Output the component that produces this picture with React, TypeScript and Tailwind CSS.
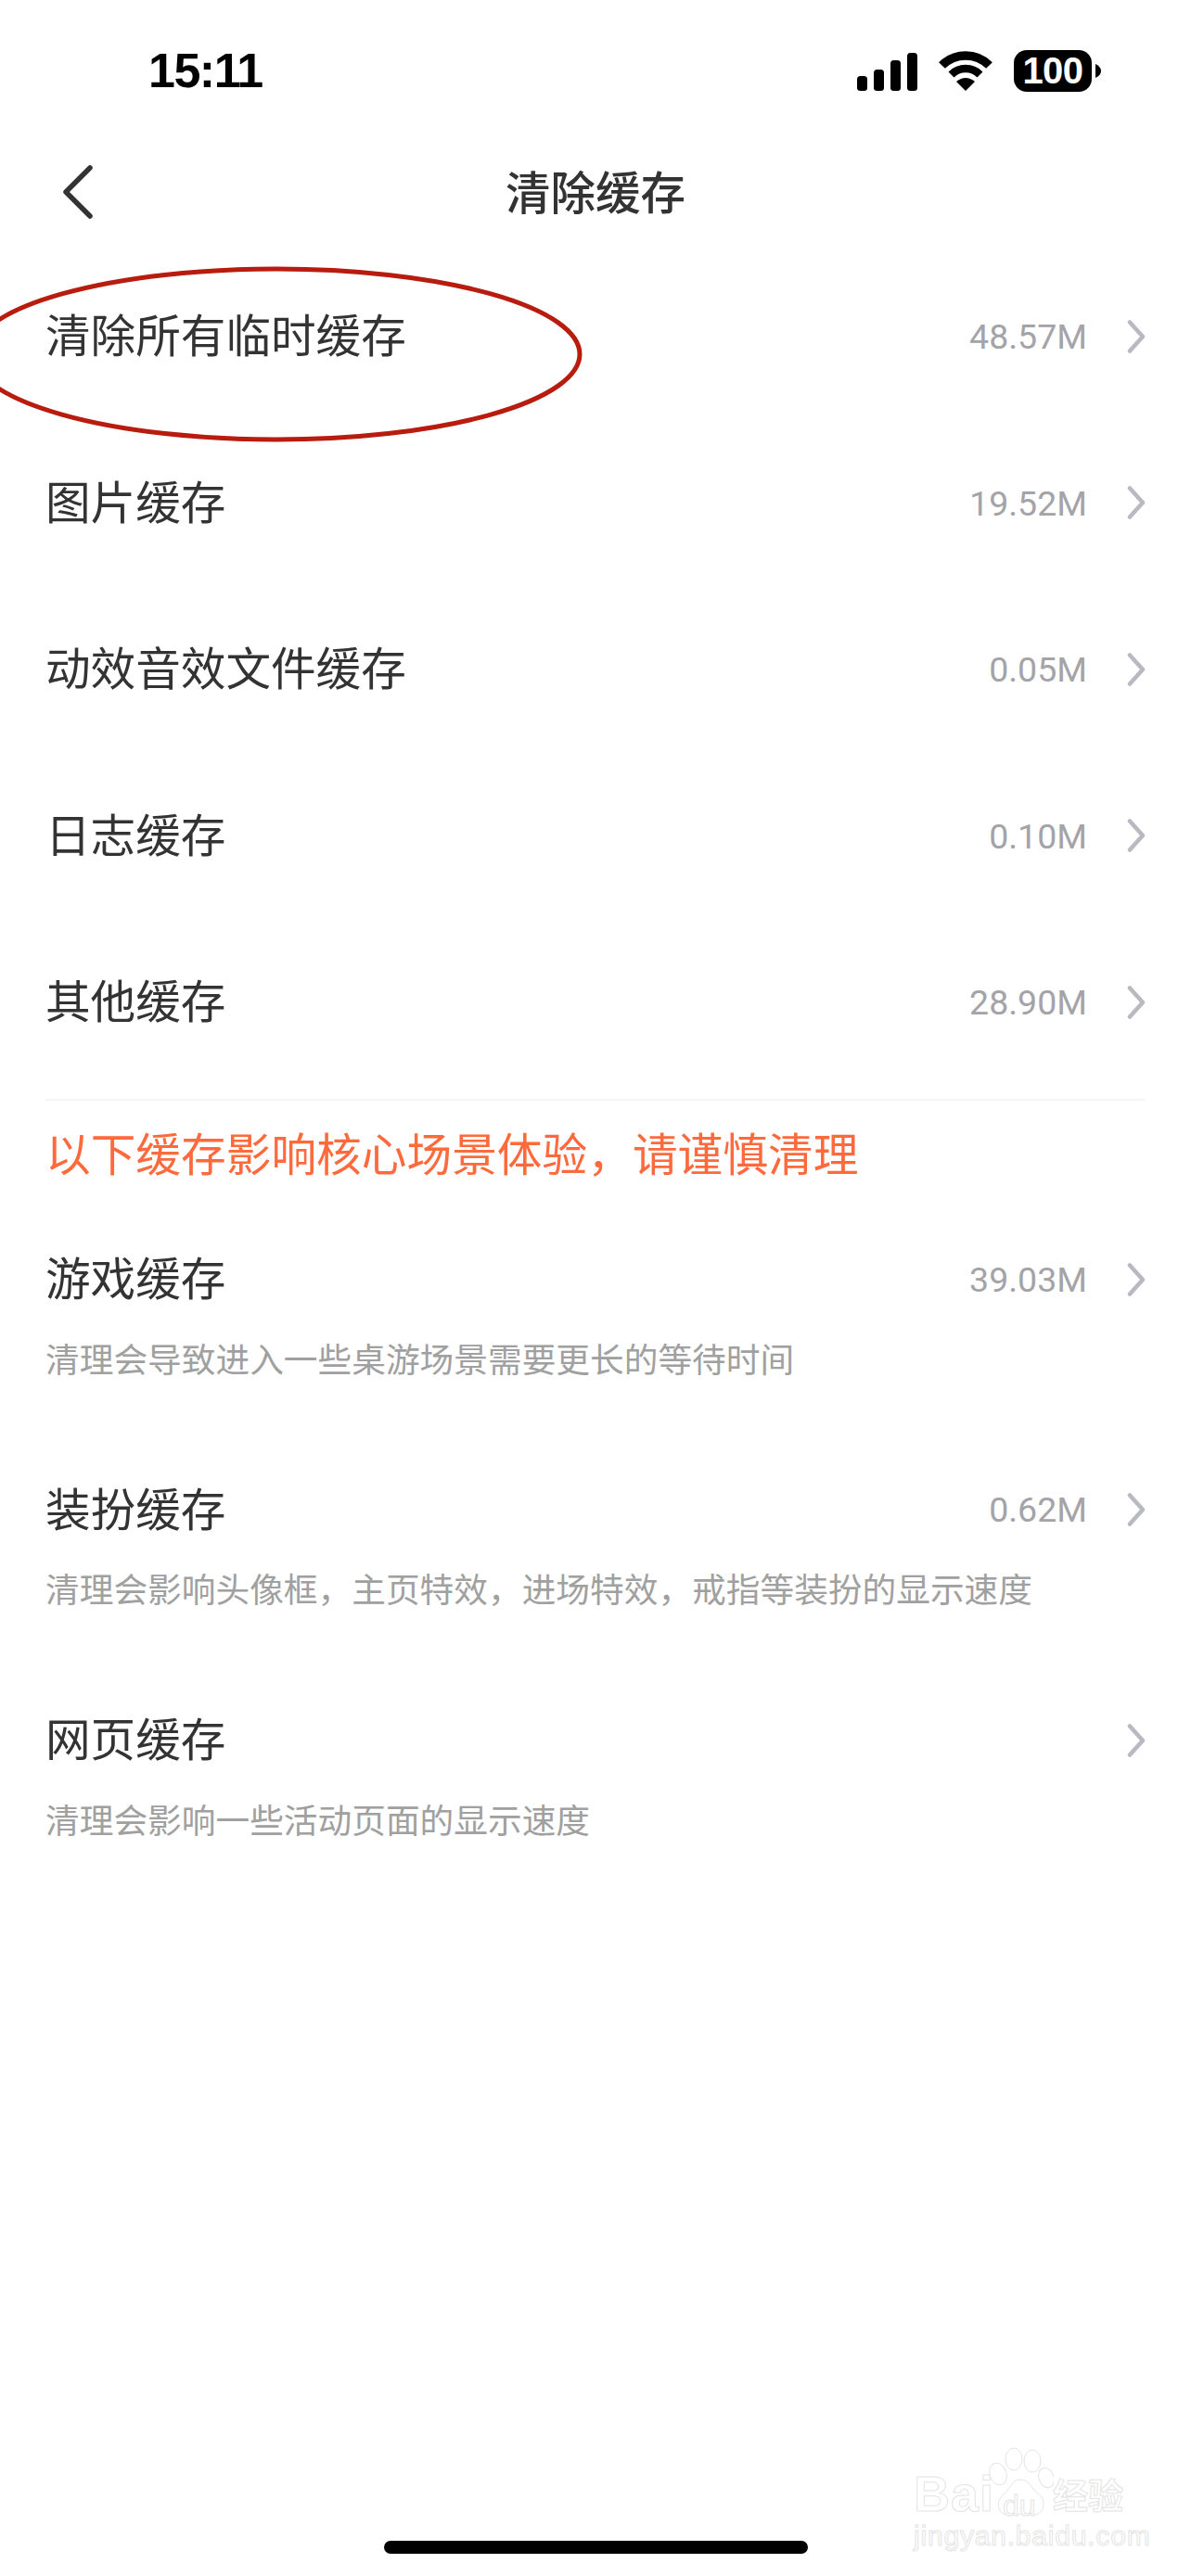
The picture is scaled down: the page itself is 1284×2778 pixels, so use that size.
const CJK = "font-['Noto_Sans_CJK_SC','Noto_Sans',sans-serif]";

function Chevron() {
  return (
    <svg width="20" height="36" viewBox="0 0 20 36" fill="none" className="shrink-0">
      <path d="M3 2.5 L17 18 L3 33.5" stroke="#b9b9c1" strokeWidth="4.5" strokeLinecap="round" strokeLinejoin="round" />
    </svg>
  );
}

function Trailing({ value }: { value?: string }) {
  return (
    <div className="flex items-center gap-[43px]">
      {value && <span className="pt-[2px] font-['Roboto',sans-serif] text-[37.5px] leading-none text-[#a3a3a8]">{value}</span>}
      <Chevron />
    </div>
  );
}

function Row({ title, value }: { title: string; value?: string }) {
  return (
    <div className="flex h-[179.5px] items-center justify-between">
      <span className="pb-[6px] text-[48.6px] leading-none text-[#333333]">{title}</span>
      <Trailing value={value} />
    </div>
  );
}

function SubRow({ title, value, sub }: { title: string; value?: string; sub: string }) {
  return (
    <div className="h-[248.5px]">
      <div className="flex h-[60px] items-center justify-between">
        <span className="pb-[6px] text-[48.6px] leading-none text-[#333333]">{title}</span>
        <Trailing value={value} />
      </div>
      <p className="mt-[30px] text-[36.7px] leading-[48px] text-[#a0a0a0]">{sub}</p>
    </div>
  );
}

function StatusIcons() {
  return (
    <div className="flex items-center">
      <svg width="65" height="41" viewBox="0 0 65 41" className="mt-[2px]">
        <rect x="0" y="25" width="11" height="16" rx="3.5" fill="#000" />
        <rect x="18" y="18" width="11" height="23" rx="3.5" fill="#000" />
        <rect x="36" y="8" width="11" height="33" rx="3.5" fill="#000" />
        <rect x="54" y="0" width="11" height="41" rx="3.5" fill="#000" />
      </svg>
      <svg width="58" height="43" viewBox="0 0 58 43" className="ml-[23px]">
        <path d="M3.5 15.5 A36 36 0 0 1 54.5 15.5" fill="none" stroke="#000" strokeWidth="9.5" />
        <path d="M13.5 25.5 A22 22 0 0 1 44.5 25.5" fill="none" stroke="#000" strokeWidth="8.5" />
        <path d="M29 43 L19 33 Q29 25 39 33 Z" fill="#000" />
      </svg>
      <div className="ml-[23px] flex h-[45px] w-[84px] items-center justify-center rounded-[14px] bg-black font-['Liberation_Sans',sans-serif] text-[40px] font-bold leading-none tracking-[-0.5px] text-white">
        100
      </div>
      <svg width="6" height="15" viewBox="0 0 6 15" className="ml-[4px]">
        <path d="M0 0 Q6 3 6 7.5 Q6 12 0 15 Z" fill="#000" />
      </svg>
    </div>
  );
}

function Watermark() {
  const outline = "text-white [-webkit-text-stroke:1px_#e4e4e4]";
  return (
    <div className="absolute left-[984px] top-[2636px] h-[120px] w-[236px]">
      <span className={`absolute left-[1px] top-[26px] font-['Liberation_Sans',sans-serif] text-[54px] font-bold leading-none tracking-[1px] ${outline}`}>Bai</span>
      <svg width="72" height="76" viewBox="0 0 72 76" className="absolute left-[80px] top-[2px]" fill="#fff" stroke="#e4e4e4" strokeWidth="1">
        <ellipse cx="12" cy="30" rx="9" ry="12" transform="rotate(-20 12 30)" />
        <ellipse cx="29" cy="14" rx="9" ry="12" />
        <ellipse cx="49" cy="16" rx="9" ry="12" />
        <ellipse cx="64" cy="34" rx="8" ry="11" transform="rotate(-20 64 34)" />
        <path d="M36 36 C46 36 48 46 56 52 C66 60 60 75 50 74 C42 73 32 73 24 74 C12 75 8 60 18 52 C26 46 26 36 36 36 Z" />
      </svg>
      <span className={`absolute left-[97px] top-[50px] font-['Liberation_Sans',sans-serif] text-[32px] leading-none ${outline}`}>du</span>
      <span className={`absolute left-[151px] top-[34px] text-[38px] font-bold leading-none ${outline}`}>经验</span>
      <span className={`absolute left-[1px] top-[84px] font-['Liberation_Sans',sans-serif] text-[30px] leading-none tracking-[0.8px] ${outline}`}>jingyan.baidu.com</span>
    </div>
  );
}

export default function App() {
  return (
    <div className={`relative h-[2778px] w-full overflow-hidden bg-white ${CJK}`}>
      {/* status bar */}
      <div className="flex h-[152px] items-center justify-between pl-[160px] pr-[97px]">
        <span className="font-['Liberation_Sans',sans-serif] text-[52px] font-bold leading-none tracking-[-1.5px] text-black">15:11</span>
        <StatusIcons />
      </div>

      {/* nav bar */}
      <div className="relative flex h-[110px] items-center justify-center">
        <svg width="36" height="58" viewBox="0 0 36 58" fill="none" className="absolute left-[66px] top-[26px]">
          <path d="M31 3 L5 29 L31 55" stroke="#333333" strokeWidth="5.5" strokeLinecap="round" strokeLinejoin="round" />
        </svg>
        <span className="pb-[4px] text-[48.5px] font-medium leading-none text-[#333333]">清除缓存</span>
      </div>

      <div className="mt-[11px] px-[49px]">
        <Row title="清除所有临时缓存" value="48.57M" />
        <Row title="图片缓存" value="19.52M" />
        <Row title="动效音效文件缓存" value="0.05M" />
        <Row title="日志缓存" value="0.10M" />
        <Row title="其他缓存" value="28.90M" />

        <div className="mt-[14px] h-[2px] bg-[#f5f5f5]" />

        <p className="mt-[27px] text-[48.7px] leading-[56px] text-[#ff6a3d]">以下缓存影响核心场景体验，请谨慎清理</p>

        <div className="mt-[80px]">
          <SubRow title="游戏缓存" value="39.03M" sub="清理会导致进入一些桌游场景需要更长的等待时间" />
          <SubRow title="装扮缓存" value="0.62M" sub="清理会影响头像框，主页特效，进场特效，戒指等装扮的显示速度" />
          <SubRow title="网页缓存" sub="清理会影响一些活动页面的显示速度" />
        </div>
      </div>

      {/* hand-drawn annotation */}
      <svg width="640" height="200" viewBox="0 0 640 200" className="absolute left-0 top-[282px] overflow-visible" fill="none">
        <ellipse cx="298" cy="100" rx="327" ry="92" stroke="#b81c0e" strokeWidth="5" />
      </svg>

      <Watermark />

      {/* home indicator */}
      <div className="absolute bottom-[24px] left-[414px] h-[14px] w-[457px] rounded-full bg-black" />
    </div>
  );
}
